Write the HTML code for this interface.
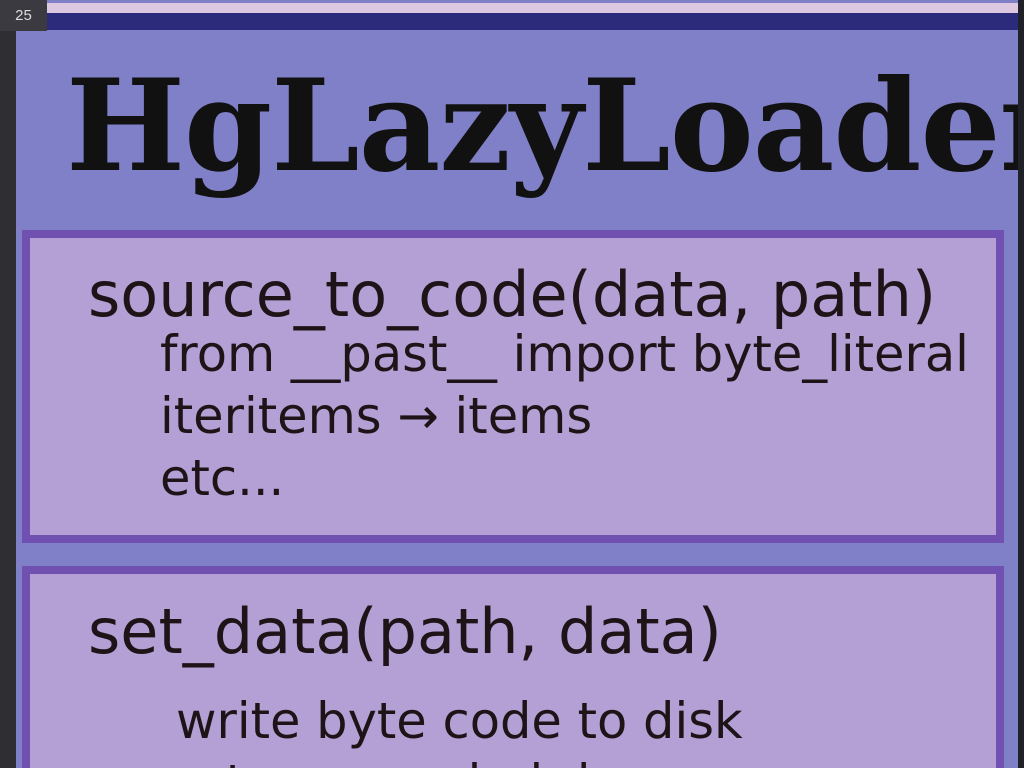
<!DOCTYPE html>
<html style="overflow:hidden;width:1024px;height:768px"><head><meta charset="utf-8"><style>
html,body{overflow:hidden}
body{margin:0;width:1024px;height:768px;background:#2e2e33;position:relative;font-family:"DejaVu Sans","Liberation Sans",sans-serif;color:#1e1418}
div{position:absolute}
.t{white-space:nowrap;line-height:1}
.h{font-size:62px}
.s{font-size:49.5px}
</style></head><body>
<div style="left:16px;top:0;width:1002px;height:768px;background:#8080c8"></div>
<div style="left:16px;top:3px;width:1002px;height:10px;background:#dcc8e0"></div>
<div style="left:16px;top:13px;width:1002px;height:17px;background:#2c2a7a"></div>
<div style="left:0;top:0;width:47px;height:31px;background:#3a3a40;color:#ddd;font-size:15px;line-height:31px;text-align:center;font-family:'Liberation Sans',sans-serif">25</div>
<div style="left:16px;top:30px;width:1002px;height:200px;overflow:hidden">
<div class="t" style="left:50px;top:33px;font-family:'DejaVu Serif',serif;font-weight:bold;font-size:126px;color:#111;letter-spacing:-1px">HgLazyLoader</div>
</div>
<div style="left:1018px;top:0;width:6px;height:768px;background:#202028"></div>
<div style="left:22px;top:230px;width:966px;height:297px;border:8px solid #7050b0;background:#b4a0d4"></div>
<div style="left:22px;top:566px;width:966px;height:202px;border:8px solid #7050b0;border-bottom:none;background:#b4a0d4;box-sizing:border-box;width:982px"></div>
<div class="t h" style="left:88px;top:264px">source_to_code(data, path)</div>
<div class="t s" style="left:160px;top:330px">from __past__ import byte_literal</div>
<div class="t s" style="left:160px;top:392px">iteritems → items</div>
<div class="t s" style="left:160px;top:454px">etc...</div>
<div class="t h" style="left:88px;top:601px">set_data(path, data)</div>
<div class="t s" style="left:176px;top:697px">write byte code to disk</div>
<div style="left:30px;top:748px;width:966px;height:20px;overflow:hidden"><div class="t s" style="left:146px;top:11px">return marshal.dumps</div></div>
</body></html>
